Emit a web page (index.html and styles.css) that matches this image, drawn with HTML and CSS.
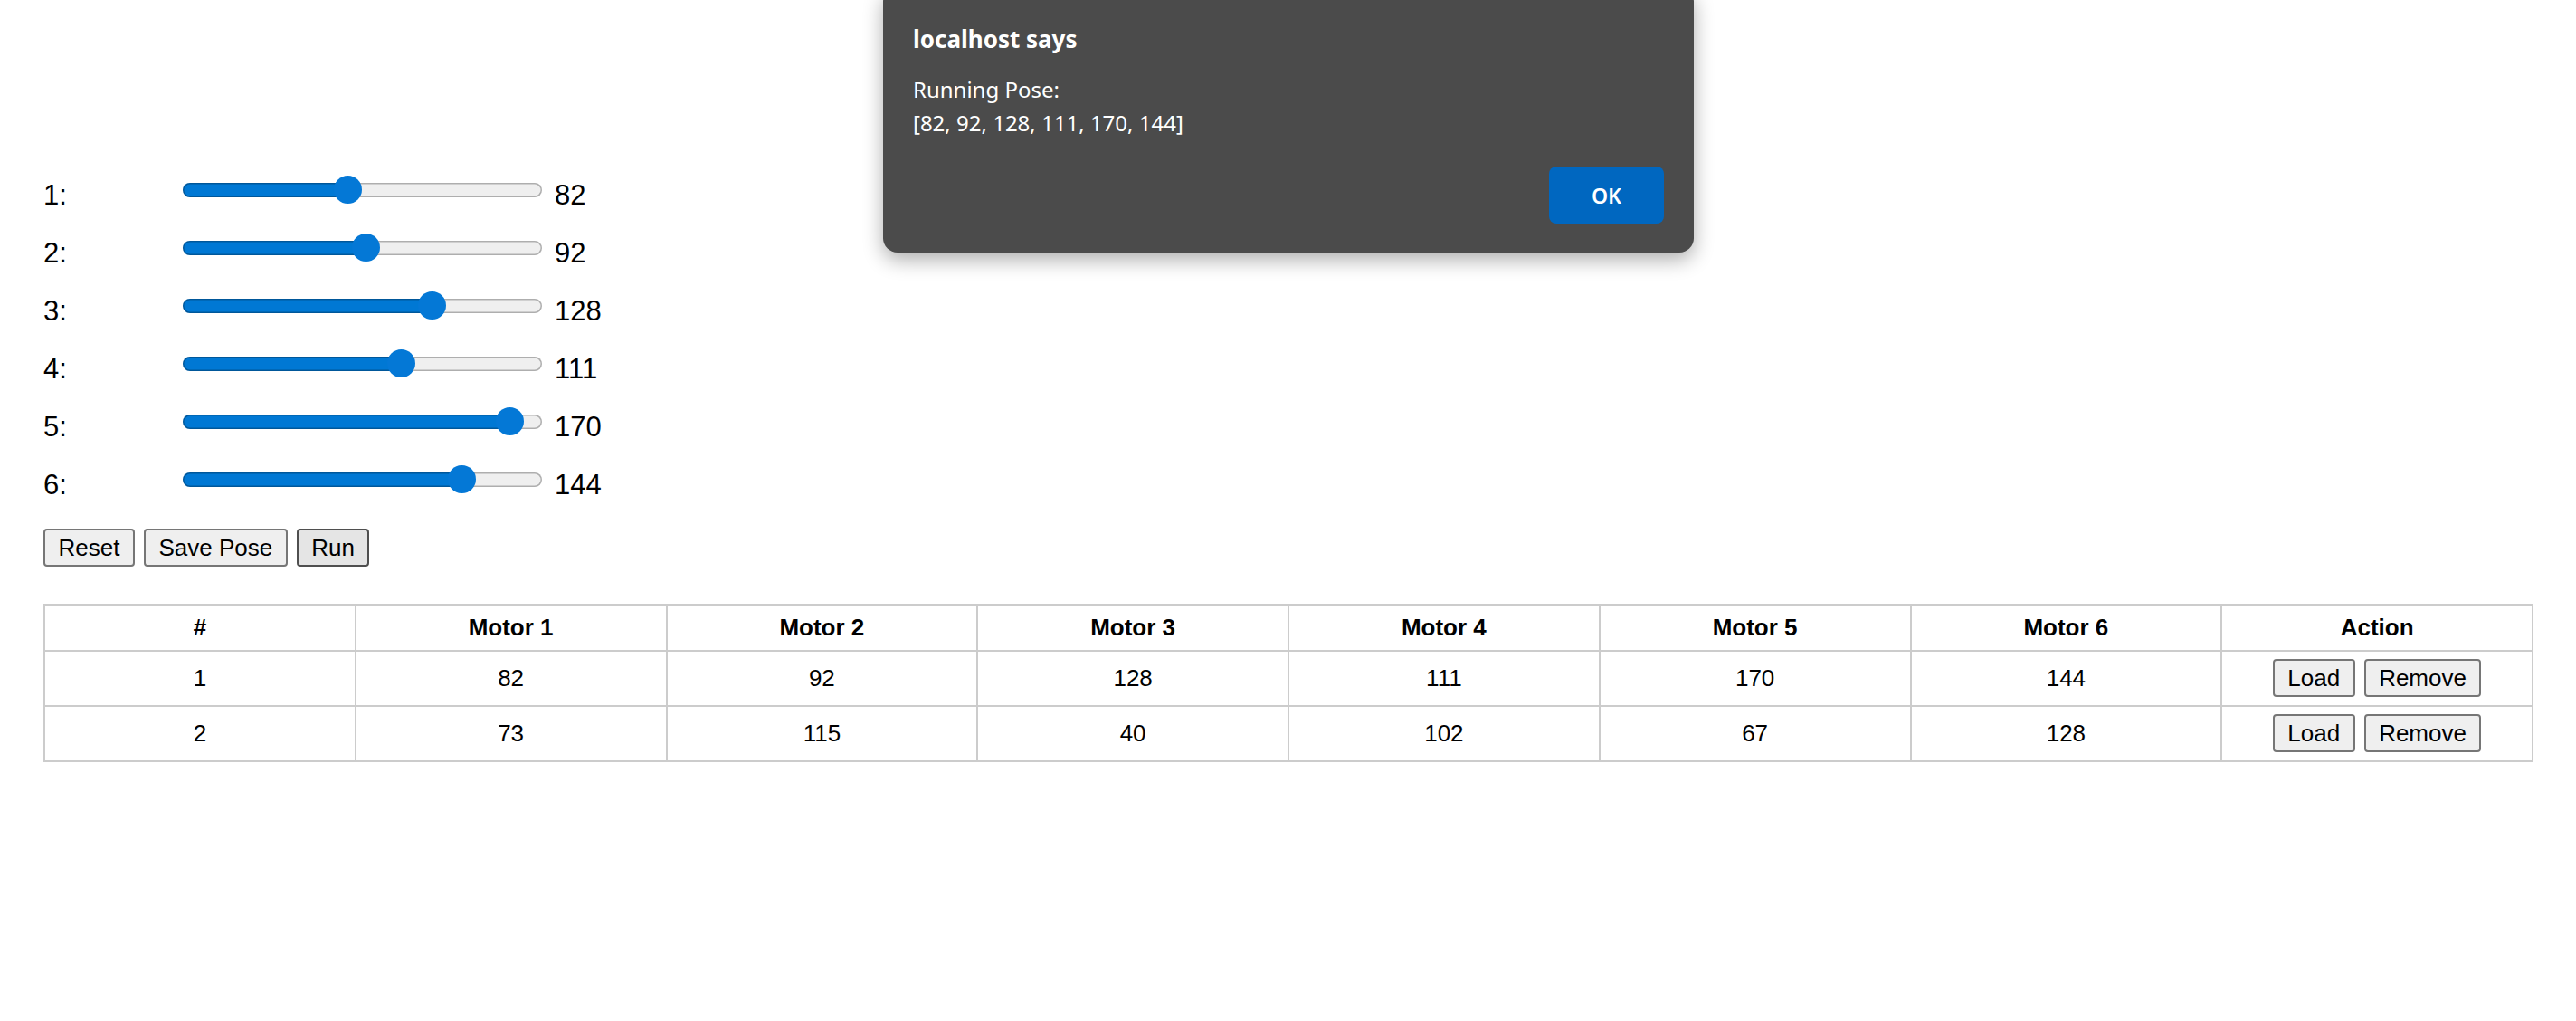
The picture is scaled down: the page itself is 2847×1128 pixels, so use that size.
FILE: index.html
```html
<!DOCTYPE html>
<html lang="en">
<head>
<meta charset="utf-8">
<title>Robot Arm Control</title>
<link rel="stylesheet" href="styles.css">
</head>
<body>
<div class="page">
  <div class="sliders">
    <div class="slider-row"><label class="slider-label" for="m1">1:</label><input class="slider" id="m1" type="range" min="0" max="180" value="82" style="--v:82"><span class="slider-value">82</span></div>
    <div class="slider-row"><label class="slider-label" for="m2">2:</label><input class="slider" id="m2" type="range" min="0" max="180" value="92" style="--v:92"><span class="slider-value">92</span></div>
    <div class="slider-row"><label class="slider-label" for="m3">3:</label><input class="slider" id="m3" type="range" min="0" max="180" value="128" style="--v:128"><span class="slider-value">128</span></div>
    <div class="slider-row"><label class="slider-label" for="m4">4:</label><input class="slider" id="m4" type="range" min="0" max="180" value="111" style="--v:111"><span class="slider-value">111</span></div>
    <div class="slider-row"><label class="slider-label" for="m5">5:</label><input class="slider" id="m5" type="range" min="0" max="180" value="170" style="--v:170"><span class="slider-value">170</span></div>
    <div class="slider-row"><label class="slider-label" for="m6">6:</label><input class="slider" id="m6" type="range" min="0" max="180" value="144" style="--v:144"><span class="slider-value">144</span></div>
  </div>

  <div class="controls">
    <button class="btn">Reset</button>
    <button class="btn">Save Pose</button>
    <button class="btn btn-active">Run</button>
  </div>

  <table class="poses">
    <thead>
      <tr><th>#</th><th>Motor 1</th><th>Motor 2</th><th>Motor 3</th><th>Motor 4</th><th>Motor 5</th><th>Motor 6</th><th>Action</th></tr>
    </thead>
    <tbody>
      <tr><td>1</td><td>82</td><td>92</td><td>128</td><td>111</td><td>170</td><td>144</td><td><div class="actions"><button class="btn">Load</button><button class="btn">Remove</button></div></td></tr>
      <tr><td>2</td><td>73</td><td>115</td><td>40</td><td>102</td><td>67</td><td>128</td><td><div class="actions"><button class="btn">Load</button><button class="btn">Remove</button></div></td></tr>
    </tbody>
  </table>
</div>

<div class="dialog" role="alertdialog">
  <div class="dialog-title">localhost says</div>
  <div class="dialog-message">Running Pose:<br>[82, 92, 128, 111, 170, 144]</div>
  <div class="dialog-footer"><button class="dialog-ok">OK</button></div>
</div>
</body>
</html>
```

FILE: styles.css
```css
html, body {
  margin: 0;
  background: #ffffff;
}

body {
  font-family: "Liberation Sans", Arial, sans-serif;
  color: #000;
}

.page {
  padding: 184px 47px 0 48px;
}

/* sliders */
.slider-row {
  display: flex;
  align-items: center;
  height: 64px;
}

.slider-label {
  width: 154px;
  font-size: 31px;
}

.slider {
  -webkit-appearance: none;
  appearance: none;
  width: 397px;
  height: 31px;
  margin: 0 0 13px 0;
  padding: 0;
  background: transparent;
}

.slider::-webkit-slider-runnable-track {
  height: 16px;
  border-radius: 8px;
  background: linear-gradient(to right,
      #0078d4 calc(15.5px + (100% - 31px) * var(--v) / 180),
      #efefef calc(15.5px + (100% - 31px) * var(--v) / 180));
  box-shadow: inset 0 0 0 1.5px rgba(0, 0, 0, 0.27);
}

.slider::-webkit-slider-thumb {
  -webkit-appearance: none;
  appearance: none;
  width: 31px;
  height: 31px;
  border-radius: 50%;
  background: #0478d6;
  border: none;
  margin-top: -7.5px;
}

.slider-value {
  margin-left: 14px;
  font-size: 31px;
}

/* buttons */
.controls {
  display: flex;
  gap: 10px;
  margin-top: 16px;
}

.btn {
  font-family: "Liberation Sans", Arial, sans-serif;
  font-size: 26px;
  color: #000;
  height: 42px;
  padding: 0 14.5px;
  border: 2px solid #767676;
  border-radius: 4px;
  background: #efefef;
  line-height: 1;
}

.btn-active {
  background: #e5e5e5;
  border-color: #4f4f4f;
}

/* table */
.poses {
  width: 100%;
  margin-top: 41px;
  border-collapse: collapse;
  table-layout: fixed;
  font-size: 26px;
}

.poses th,
.poses td {
  border: 2px solid #cccccc;
  text-align: center;
}

.poses th {
  font-weight: bold;
  padding: 8.5px 0 9px;
}

.poses td {
  padding: 8.5px 0;
}

.actions {
  display: flex;
  justify-content: center;
  gap: 10px;
}

/* alert dialog */
.dialog {
  position: absolute;
  left: 976px;
  top: -14px;
  width: 896px;
  box-sizing: border-box;
  padding: 39px 33px 32px 33px;
  background: #4b4b4b;
  border-radius: 16px;
  box-shadow: 0 8px 22px rgba(0, 0, 0, 0.32);
  color: #ffffff;
  font-family: "Noto Sans", "Open Sans", sans-serif;
}

.dialog-title {
  font-size: 26px;
  font-weight: bold;
  line-height: 36px;
}

.dialog-message {
  margin-top: 20px;
  font-size: 24px;
  line-height: 36.7px;
}

.dialog-footer {
  display: flex;
  justify-content: flex-end;
  margin-top: 30px;
}

.dialog-ok {
  width: 127px;
  height: 63px;
  border: none;
  border-radius: 8px;
  background: #0067c0;
  color: #ffffff;
  font-family: "Noto Sans", "Open Sans", sans-serif;
  font-size: 23px;
  font-weight: 600;
}
```
